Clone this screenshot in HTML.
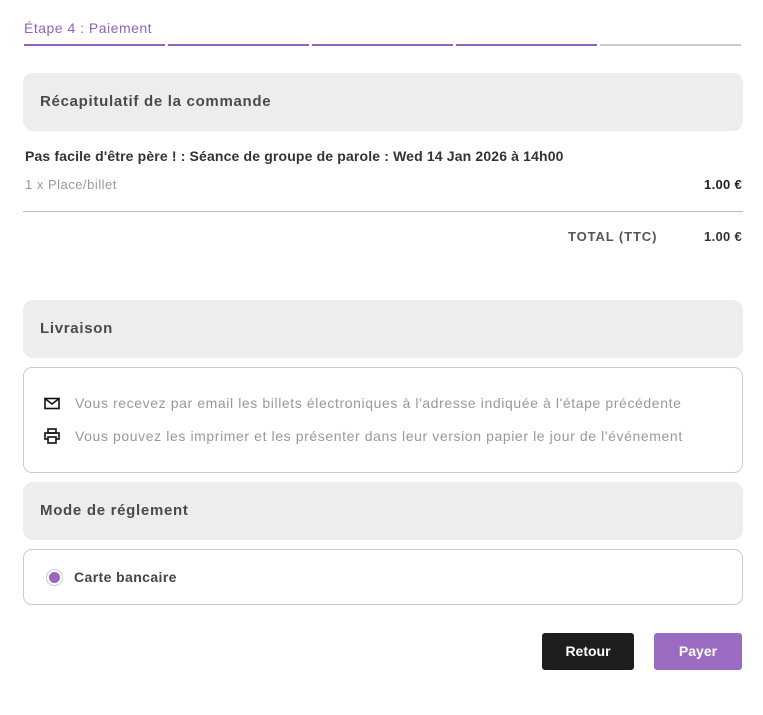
<!DOCTYPE html>
<html><head><meta charset="utf-8"><style>
*{box-sizing:border-box;margin:0;padding:0}
body{width:763px;height:715px;background:#fff;font-family:"Liberation Sans",sans-serif;position:relative;color:#444}
.a{position:absolute}
.step{top:20px;left:24px;font-size:14px;color:#8f63bd;letter-spacing:0.5px}
.seg{top:44px;height:2px;width:141px;background:#8f63bd}
.box{left:23px;width:720px;height:58px;background:#ededed;border-radius:10px;font-size:15px;font-weight:bold;color:#4a4a4a;padding:20px 17px;letter-spacing:0.7px}
.bd{left:23px;width:720px;border:1px solid #ccc;border-radius:9px}
.g{font-size:14px;color:#999;letter-spacing:0.6px}
</style></head><body>
<div class="a step">Étape 4 : Paiement</div>
<div class="a seg" style="left:24px"></div>
<div class="a seg" style="left:168px"></div>
<div class="a seg" style="left:312px"></div>
<div class="a seg" style="left:456px"></div>
<div class="a seg" style="left:600px;background:#ccc"></div>

<div class="a box" style="top:73px">Récapitulatif de la commande</div>
<div class="a" style="top:148px;left:25px;font-size:14px;font-weight:bold;color:#333;letter-spacing:0.15px">Pas facile d'être père ! : Séance de groupe de parole : Wed 14 Jan 2026 à 14h00</div>
<div class="a" style="top:177px;left:25px;font-size:13px;color:#999;letter-spacing:0.5px">1 x Place/billet</div>
<div class="a" style="top:177px;right:21px;font-size:13px;font-weight:bold;color:#222;letter-spacing:0.3px">1.00 €</div>
<div class="a" style="top:211px;left:23px;width:720px;height:1px;background:#bbb"></div>
<div class="a" style="top:229px;left:568px;font-size:13px;font-weight:bold;color:#555;letter-spacing:0.9px">TOTAL (TTC)</div>
<div class="a" style="top:229px;right:21px;font-size:13px;font-weight:bold;color:#333;letter-spacing:0.3px">1.00 €</div>

<div class="a box" style="top:300px">Livraison</div>
<div class="a bd" style="top:367px;height:106px"></div>
<svg class="a" style="top:397px;left:44px" width="16" height="13" viewBox="0 0 16 13"><rect x="1" y="1.5" width="14" height="10" fill="none" stroke="#111" stroke-width="1.6"/><path d="M1.5 2l6.5 5 6.5-5" fill="none" stroke="#111" stroke-width="1.6"/></svg>
<div class="a g" style="top:395px;left:75px">Vous recevez par email les billets électroniques à l'adresse indiquée à l'étape précédente</div>
<svg class="a" style="top:428px;left:44px" width="16" height="16" viewBox="0 0 16 16"><rect x="4" y="1" width="8" height="4" fill="none" stroke="#111" stroke-width="1.6"/><rect x="1" y="5" width="14" height="6" fill="none" stroke="#111" stroke-width="1.6"/><rect x="4" y="9" width="8" height="6" fill="#fff" stroke="#111" stroke-width="1.6"/></svg>
<div class="a g" style="top:428px;left:75px">Vous pouvez les imprimer et les présenter dans leur version papier le jour de l'événement</div>

<div class="a box" style="top:482px">Mode de réglement</div>
<div class="a bd" style="top:549px;height:56px"></div>
<div class="a" style="top:569px;left:46px;width:17px;height:17px;border:1px solid #ccc;border-radius:50%;background:#fff"><div style="margin:2px;width:11px;height:11px;border-radius:50%;background:#9a65c0"></div></div>
<div class="a" style="top:569px;left:74px;font-size:14px;font-weight:bold;color:#444;letter-spacing:0.4px">Carte bancaire</div>

<div class="a" style="top:633px;left:542px;width:92px;height:37px;background:#1e1e1e;border-radius:3px;color:#fff;font-size:14px;font-weight:bold;text-align:center;line-height:37px">Retour</div>
<div class="a" style="top:633px;left:654px;width:88px;height:37px;background:#9a6bc0;border-radius:3px;color:#fff;font-size:14px;font-weight:bold;text-align:center;line-height:37px">Payer</div>
</body></html>
